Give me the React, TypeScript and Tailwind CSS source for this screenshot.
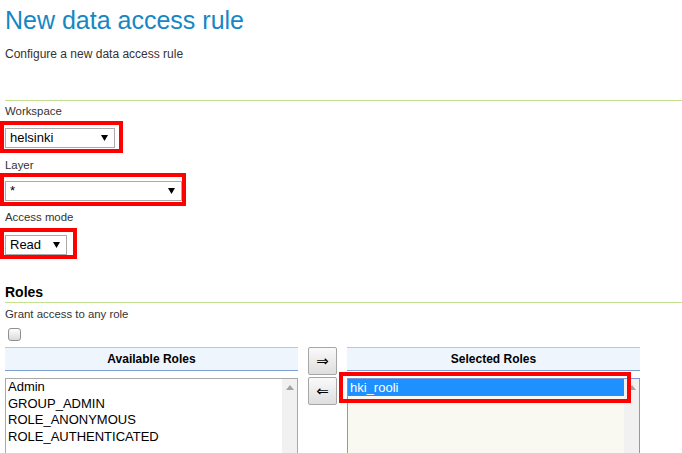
import React from "react";

function Arrow() {
  return (
    <svg width="7" height="6" viewBox="0 0 7 6" className="shrink-0">
      <polygon points="0,0 7,0 3.5,6" fill="#000" />
    </svg>
  );
}

function Sel({ text, w, red }: { text: string; w: string; red: string }) {
  return (
    <div className="relative w-fit">
      <div className={`relative z-10 flex h-[20px] items-center justify-between border border-[#aaa] bg-white pl-[4px] pr-[6px] text-[13px] leading-[18px] text-black ${w}`}>
        <span>{text}</span>
        <Arrow />
      </div>
      <div className={`pointer-events-none absolute border-4 border-[#ff0000] ${red}`} />
    </div>
  );
}

function UpArrow() {
  return (
    <svg width="8" height="5" viewBox="0 0 8 5">
      <polygon points="0,5 8,5 4,0" fill="#a3a3a3" />
    </svg>
  );
}

export default function App() {
  return (
    <div className="h-[453px] w-[682px] overflow-hidden bg-white pl-[5px] font-['Liberation_Sans',Arial,sans-serif] text-[#333]">
      <h1 className="pt-[6px] text-[25px] leading-[28px] text-[#1587c4]">New data access rule</h1>
      <p className="mt-[13px] text-[12px] leading-[14px]">Configure a new data access rule</p>
      <div className="mt-[39px] h-px bg-[#c2e08f]" />

      <div className="mt-[4px] text-[11.4px] leading-[13px]">Workspace</div>
      <div className="mt-[10px]">
        <Sel text="helsinki" w="w-[110px]" red="-left-[5px] -top-[7px] -right-[8px] -bottom-[5px]" />
      </div>

      <div className="mt-[11px] text-[11.4px] leading-[13px]">Layer</div>
      <div className="mt-[9px]">
        <Sel text="*" w="w-[177px]" red="-left-[5px] -top-[8px] -right-[4px] -bottom-[5px]" />
      </div>

      <div className="mt-[10px] text-[11.4px] leading-[13px]">Access mode</div>
      <div className="mt-[11px]">
        <Sel text="Read" w="w-[62px]" red="-left-[5px] -top-[7px] -right-[10px] -bottom-[4px]" />
      </div>

      <h2 className="mt-[29px] text-[14px] font-bold leading-[17px] text-black">Roles</h2>
      <div className="mt-[1px] h-px bg-[#c2e08f]" />
      <div className="mt-[5px] text-[11.4px] leading-[13px]">Grant access to any role</div>
      <div className="mt-[7px] ml-[3px] h-[13px] w-[13px] rounded-[3px] border border-[#8f8f8f] bg-gradient-to-b from-[#fdfdfd] to-[#dadada]" />

      <div className="mt-[6px] flex items-start">
        <div className="w-[293px]">
          <div className="flex h-[24px] items-center justify-center border-t border-b border-t-[#b3c8e6] border-b-[#7d9fd1] bg-[#eef5fd] text-[12px] font-bold text-black">
            Available Roles
          </div>
          <div className="mt-[7px] flex h-[100px] border border-[#a9a9a9] bg-white">
            <div className="flex-1 pl-[2px] text-[13px] leading-[16.7px] text-black">
              <div>Admin</div>
              <div>GROUP_ADMIN</div>
              <div>ROLE_ANONYMOUS</div>
              <div>ROLE_AUTHENTICATED</div>
            </div>
            <div className="flex w-[15px] justify-center bg-[#f1f1f1] pt-[6px]">
              <UpArrow />
            </div>
          </div>
        </div>

        <div className="ml-[10px] flex w-[29px] flex-col gap-[2px]">
          <button className="flex h-[28px] items-center justify-center rounded-[2px] border border-[#a6a6a6] bg-gradient-to-b from-[#fafafa] to-[#dedede] font-['DejaVu_Sans',sans-serif] text-[15px] leading-none text-black">
            ⇒
          </button>
          <button className="flex h-[28px] items-center justify-center rounded-[2px] border border-[#a6a6a6] bg-gradient-to-b from-[#fafafa] to-[#dedede] font-['DejaVu_Sans',sans-serif] text-[15px] leading-none text-black">
            ⇐
          </button>
        </div>

        <div className="ml-[10px] w-[293px]">
          <div className="flex h-[24px] items-center justify-center border-t border-b border-t-[#b3c8e6] border-b-[#7d9fd1] bg-[#eef5fd] text-[12px] font-bold text-black">
            Selected Roles
          </div>
          <div className="mt-[7px] flex h-[100px] border border-[#7a9bd8] bg-[#f9f9f1]">
            <div className="flex-1 text-[13px] leading-[17px]">
              <div className="relative">
                <div className="relative z-10 bg-[#1e90ff] pl-[2px] text-white">hki_rooli</div>
                <div className="pointer-events-none absolute z-20 -left-[9px] -top-[7px] -right-[7px] -bottom-[7px] border-[4px] border-[#ff0000]" />
              </div>
            </div>
            <div className="flex w-[15px] justify-center bg-[#f1f1f1] pt-[6px]">
              <UpArrow />
            </div>
          </div>
        </div>
      </div>
    </div>
  );
}
